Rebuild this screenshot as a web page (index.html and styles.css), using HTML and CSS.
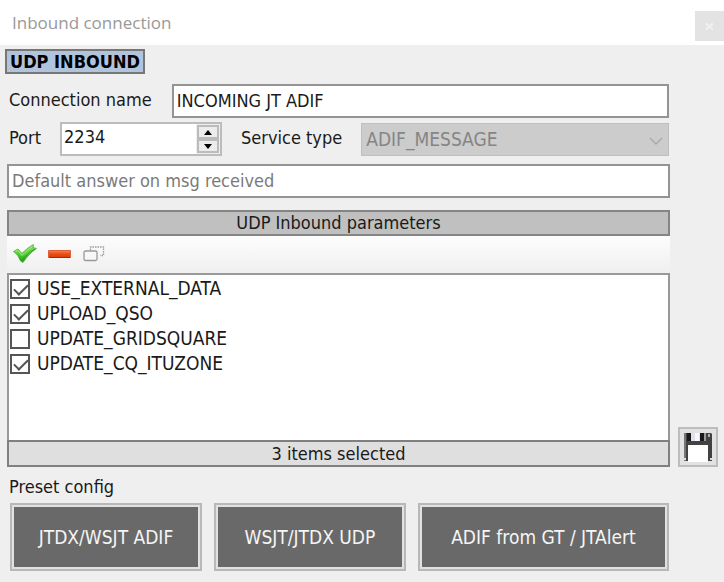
FILE: index.html
```html
<!DOCTYPE html>
<html lang="en">
<head>
    <meta charset="UTF-8">
    <meta name="viewport" content="width=device-width, initial-scale=1.0">
    <title>Inbound connection</title>
    <link rel="stylesheet" href="styles.css">
</head>
<body>

<header class="titlebar">
    <h1>Inbound connection</h1>
    <button type="button" class="close" aria-label="Close">
        <svg width="9" height="7" viewBox="0 0 9 7"><path d="M1 0.5L8 6.5M8 0.5L1 6.5" stroke="#f1f1f1" stroke-width="2"/></svg>
    </button>
</header>

<form class="content">
    <h2 class="badge">UDP INBOUND</h2>

    <div class="form-row name-row">
        <label for="connName">Connection name</label>
        <input type="text" id="connName" class="field" value="INCOMING JT ADIF">
    </div>

    <div class="form-row port-row">
        <label for="port">Port</label>
        <div class="spinner">
            <input type="number" id="port" value="2234">
            <div class="spinner-buttons">
                <button type="button" aria-label="Increase port"><svg width="8" height="5" viewBox="0 0 8 5"><path d="M0 5L4 0L8 5z"/></svg></button>
                <button type="button" aria-label="Decrease port"><svg width="8" height="5" viewBox="0 0 8 5"><path d="M0 0L4 5L8 0z"/></svg></button>
            </div>
        </div>
        <label for="serviceType">Service type</label>
        <div class="select">
            <select id="serviceType" disabled>
                <option>ADIF_MESSAGE</option>
            </select>
            <svg class="chevron" width="14" height="8" viewBox="0 0 14 8"><path d="M1 1L7 7L13 1" fill="none" stroke="#aaa" stroke-width="1.4"/></svg>
        </div>
    </div>

    <input type="text" class="field answer" aria-label="Default answer" placeholder="Default answer on msg received">

    <section class="panel">
        <h3>UDP Inbound parameters</h3>
        <div class="toolbar">
            <button type="button" aria-label="Check all">
                <svg width="24" height="20" viewBox="0 0 24 20">
                    <defs>
                        <linearGradient id="green" x1="0" y1="0" x2="0" y2="1">
                            <stop offset="0" stop-color="#8be06a"/>
                            <stop offset="0.5" stop-color="#55cf38"/>
                            <stop offset="1" stop-color="#1f9a12"/>
                        </linearGradient>
                    </defs>
                    <path d="M0.500 7.500L5 5L9 9.500C12 6 16 3 20.500 0.500L20 3.500L23.500 4.500C18 8 14 13 10 18.500L7.500 17C6 13 4 10 0.500 7.500z" fill="url(#green)" stroke="#4fb63c" stroke-width="0.8"/>
                    <path d="M2.500 7.500L5 6.500L9 11.500C13 7 16 5 19 3" fill="none" stroke="#a5ee8a" stroke-width="1"/>
                    <path d="M6 13C7 15 8 16 9 17C12 12.500 16 8.500 22 5" fill="none" stroke="#2a9c20" stroke-width="1"/>
                </svg>
            </button>
            <button type="button" aria-label="Uncheck all">
                <svg width="24" height="20" viewBox="0 0 24 20">
                    <defs>
                        <linearGradient id="red" x1="0" y1="0" x2="0" y2="1">
                            <stop offset="0" stop-color="#f28a5a"/>
                            <stop offset="0.4" stop-color="#f0531c"/>
                            <stop offset="1" stop-color="#d93a08"/>
                        </linearGradient>
                    </defs>
                    <path d="M0.500 6.500H22.500V13.500H0.500z" fill="url(#red)" stroke="#d8613a"/>
                    <path d="M1 13.500H22" stroke="#b3220a"/>
                </svg>
            </button>
            <button type="button" aria-label="Invert selection">
                <svg width="24" height="20" viewBox="0 0 24 20" fill="none">
                    <path d="M7.500 6V3H20.500V11.500H17" stroke="#999" stroke-width="1.300" stroke-dasharray="1.500 1"/>
                    <rect x="1" y="7" width="13" height="9.500" rx="1.500" fill="#f7f7f7" stroke="#999" stroke-width="1.300"/>
                </svg>
            </button>
        </div>
        <div class="list">
            <label><input type="checkbox" checked>USE_EXTERNAL_DATA</label>
            <label><input type="checkbox" checked>UPLOAD_QSO</label>
            <label><input type="checkbox">UPDATE_GRIDSQUARE</label>
            <label><input type="checkbox" checked>UPDATE_CQ_ITUZONE</label>
        </div>
        <div class="status">3 items selected</div>
    </section>

    <button type="button" class="save" aria-label="Save">
        <svg width="30" height="30" viewBox="0 0 30 30">
            <path d="M1 1H28L29 2V29H1z" fill="#424242"/>
            <path d="M1 1H3V29H1z" fill="#777"/>
            <path d="M4 1H8V9H4z" fill="#191919"/>
            <path d="M8 1H22V9H8z" fill="#dfe2ec"/>
            <path d="M12 1H16V9H12z" fill="#f7f8ff"/>
            <path d="M17 1H21V9H17z" fill="#181818"/>
            <path d="M21 1H23V9H21z" fill="#999"/>
            <path d="M25 2H27V5H25z" fill="#aaa"/>
            <path d="M5 13H25V30H5z" fill="#fff"/>
            <path d="M1 26H3V28H1zM27 26H29V28H27z" fill="#ddd"/>
        </svg>
    </button>

    <section class="presets">
        <h4>Preset config</h4>
        <div class="preset-buttons">
            <button type="button">JTDX/WSJT ADIF</button>
            <button type="button">WSJT/JTDX UDP</button>
            <button type="button">ADIF from GT / JTAlert</button>
        </div>
    </section>
</form>

</body>
</html>
```
FILE: styles.css
```css
* {
    box-sizing: border-box;
}
body {
    margin: 0;
    background: #efefef;
    color: #1a1a1a;
    font: 18px/24px "DejaVu Sans Condensed", "DejaVu Sans", sans-serif;
}
h1, h2, h3, h4 {
    margin: 0;
    font-size: inherit;
    font-weight: normal;
}
input, select, button {
    font: inherit;
    color: inherit;
    margin: 0;
    min-width: 0;
}
svg {
    display: block;
}

.titlebar {
    display: flex;
    align-items: center;
    justify-content: space-between;
    height: 45px;
    padding-left: 12px;
    background: #fff;
}
.titlebar h1 {
    font-family: "Open Sans", sans-serif;
    font-size: 17px;
    color: #999;
}
.close {
    display: grid;
    place-items: center;
    width: 29px;
    height: 30px;
    margin-top: 7px;
    padding: 0;
    border: none;
    background: #e3e3e3;
}

.content {
    display: grid;
    grid-template-columns: 1fr 40px;
    column-gap: 8px;
    padding: 4px 6px 10px 7px;
}
.content > * {
    grid-column: 1;
}
.badge {
    justify-self: start;
    height: 25px;
    margin-left: -2px;
    padding: 0 3px;
    border: 2px solid #777;
    background: #b0c4de;
    color: #000;
    font-weight: bold;
    line-height: 22px;
}
.form-row {
    display: flex;
    align-items: center;
    padding: 0 1px 0 2px;
}
.name-row {
    margin-top: 10px;
    gap: 20px;
}
.field {
    width: 100%;
    height: 34px;
    padding: 0 3px 2px;
    border: 2px solid #949494;
    background: #fff;
}
.name-row .field {
    flex: 1;
}
.port-row {
    margin-top: 4px;
    gap: 19px;
}
.form-row label {
    padding-bottom: 2px;
}
.spinner {
    display: flex;
    width: 162px;
    height: 34px;
    border: 2px solid #bbbbc0;
    background: #fff;
}
.spinner input {
    flex: 1;
    padding: 0 0 4px 2px;
    border: none;
    background: none;
    appearance: textfield;
}
.spinner input::-webkit-inner-spin-button {
    display: none;
}
.spinner-buttons {
    display: grid;
    width: 24px;
    padding: 1px;
    background: #efefef;
}
.spinner-buttons button {
    display: grid;
    place-items: center;
    padding: 0;
    border: 2px solid #bbb;
    background: #ececec;
}
.select {
    position: relative;
    flex: 1;
}
.select select {
    display: block;
    width: 100%;
    height: 33px;
    padding: 0 4px;
    border: 1px solid #bfbfbf;
    border-radius: 0;
    background: #ccc;
    color: #858585;
    font-size: 19px;
    opacity: 1;
    appearance: none;
}
.chevron {
    position: absolute;
    right: 6px;
    top: 14px;
}
.answer {
    margin-top: 8px;
}
.answer::placeholder {
    color: #7a7a7a;
}

.panel {
    margin-top: 12px;
}
.panel h3 {
    height: 26px;
    border: 2px solid #858585;
    background: #c0c0c0;
    line-height: 22px;
    text-align: center;
}
.toolbar {
    display: flex;
    gap: 11px;
    height: 37px;
    padding: 8px 6px;
    background: linear-gradient(#fdfdfd, #efefef);
}
.toolbar button {
    height: 20px;
    padding: 0;
    border: none;
    background: none;
}
.list {
    height: 167px;
    padding-left: 1px;
    border: 2px solid #999;
    border-bottom: none;
    background: #fff;
    font-size: 19px;
}
.list label {
    display: flex;
    align-items: center;
    gap: 7px;
    height: 25px;
}
.list input {
    width: 20px;
    height: 20px;
    margin-top: 3px;
    border: 2px solid #555;
    background: #fff;
    appearance: none;
}
.list input:checked::before {
    content: "";
    display: block;
    width: 12px;
    height: 6px;
    margin: 3px 2px;
    border: solid #555;
    border-width: 0 0 2px 2px;
    transform: rotate(-45deg);
}
.status {
    height: 27px;
    border: 2px solid #808080;
    background: #dfdfdf;
    line-height: 24px;
    text-align: center;
}

.content > .save {
    grid-column: 2;
    align-self: end;
    display: grid;
    place-items: center;
    width: 40px;
    height: 40px;
    padding: 0;
    border: 2px solid #bdbdbd;
    background: #e2e2e2;
}

.presets {
    margin-top: 8px;
}
.presets h4 {
    padding-left: 2px;
}
.preset-buttons {
    display: grid;
    grid-template-columns: 13fr 13fr 17fr;
    gap: 12px;
    margin-top: 4px;
    padding: 0 1px 0 3px;
}
.preset-buttons button {
    height: 68px;
    padding: 0;
    border: 2px solid #b8b8b8;
    background: #696969;
    box-shadow: inset 0 0 0 2px #e1e1e1;
    color: #f5f5f5;
    font-size: 19px;
}
```
